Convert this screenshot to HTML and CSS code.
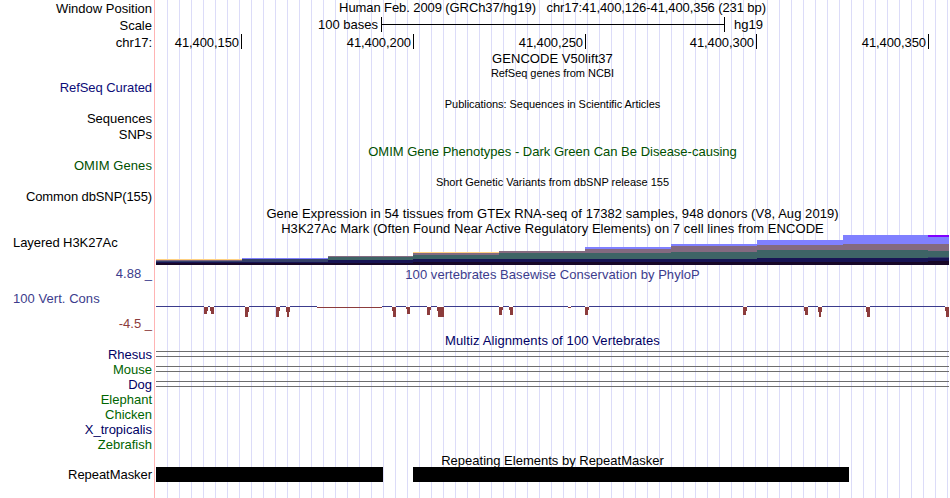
FILE: index.html
```html
<!DOCTYPE html>
<html lang="en">
<head>
    <meta charset="UTF-8">
    <title>chr17:41,400,126-41,400,356</title>
    <link rel="stylesheet" href="styles.css">
</head>
<body>
    <div class="browser">
        <div class="labels">
            <div class="label position">Window Position</div>
            <div class="label scale-label">Scale</div>
            <div class="label chrom">chr17:</div>
            <div class="label refseq navy">RefSeq Curated</div>
            <div class="label sequences">Sequences</div>
            <div class="label snps">SNPs</div>
            <div class="label omim green">OMIM Genes</div>
            <div class="label dbsnp">Common dbSNP(155)</div>
            <div class="label layered left">Layered H3K27Ac</div>
            <div class="label max blue">4.88 _</div>
            <div class="label cons left blue">100 Vert. Cons</div>
            <div class="label min red">-4.5 _</div>
            <div class="species">
                <div class="label dark">Rhesus</div>
                <div class="label forest">Mouse</div>
                <div class="label dark">Dog</div>
                <div class="label forest">Elephant</div>
                <div class="label forest">Chicken</div>
                <div class="label dark">X_tropicalis</div>
                <div class="label forest">Zebrafish</div>
            </div>
            <div class="label rmsk">RepeatMasker</div>
        </div>

        <div class="tracks">
            <div class="title window">Human Feb. 2009 (GRCh37/hg19) &nbsp; chr17:41,400,126-41,400,356 (231 bp)</div>
            <div class="scale">
                <span class="bases">100 bases</span>
                <div class="scale-bar"><div class="scale-line"></div></div>
                <span>hg19</span>
            </div>
            <div class="ruler">
                <div class="tick">41,400,150</div>
                <div class="tick">41,400,200</div>
                <div class="tick">41,400,250</div>
                <div class="tick">41,400,300</div>
                <div class="tick">41,400,350</div>
            </div>
            <div class="title gencode">GENCODE V50lift37</div>
            <div class="title small ncbi">RefSeq genes from NCBI</div>
            <div class="title small pubs">Publications: Sequences in Scientific Articles</div>
            <div class="title omim-title green">OMIM Gene Phenotypes - Dark Green Can Be Disease-causing</div>
            <div class="title small variants">Short Genetic Variants from dbSNP release 155</div>
            <div class="title gtex">Gene Expression in 54 tissues from GTEx RNA-seq of 17382 samples, 948 donors (V8, Aug 2019)</div>
            <div class="title h3k">H3K27Ac Mark (Often Found Near Active Regulatory Elements) on 7 cell lines from ENCODE</div>

            <svg class="signal" width="793" height="30" viewBox="156 235 793 30" shape-rendering="crispEdges">
                <!-- light blue -->
                <path fill="#8080ff" d="M242 258h86v2h-86zM585 247h86v3h-86zM671 244h86v3h-86zM757 240h86v6h-86zM843 235h106v10h-106z"/>
                <path fill="#8000ff" d="M928 235h21v2h-21z"/>
                <!-- yellow -->
                <path fill="#ffd080" d="M156 259h86v1h-86zM413 252h86v1h-86z"/>
                <!-- mauve -->
                <path fill="#846a80" d="M156 260h86v1h-86zM328 256h85v2h-85zM413 253h86v3h-86zM499 251h86v3h-86zM585 249h86v5h-86zM671 246h86v7h-86zM757 245h86v6h-86zM843 244h106v8h-106z"/>
                <!-- teal -->
                <path fill="#3e6466" d="M328 257h85v8h-85zM413 255h86v10h-86zM499 253h86v12h-86zM585 253h86v12h-86zM671 252h86v13h-86zM757 250h171v15h-171zM928 251h21v14h-21z"/>
                <path fill="#34406a" d="M156 261h86v1h-86zM242 259h86v3h-86zM928 257h21v1h-21z"/>
                <!-- navy -->
                <path fill="#181454" d="M156 262h172v3h-172zM328 260h85v5h-85zM413 259h344v6h-344zM757 258h192v7h-192z"/>
                <!-- near black -->
                <path fill="#180828" d="M156 263h257v2h-257zM413 262h515v3h-515zM928 261h21v4h-21z"/>
            </svg>

            <div class="title phylop blue">100 vertebrates Basewise Conservation by PhyloP</div>
            <svg class="wiggle" width="793" height="11" viewBox="156 306 793 11" shape-rendering="crispEdges">
                <path fill="#3c3c8c" d="M156 306h48v1h-48zM208 306h2v1h-2zM214 306h31v1h-31zM249 306h27v1h-27zM280 306h6v1h-6zM290 306h27v1h-27zM382 306h10v1h-10zM396 306h10v1h-10zM410 306h17v1h-17zM431 306h6v1h-6zM444 306h55v1h-55zM503 306h6v1h-6zM513 306h55v1h-55zM571 306h14v1h-14zM589 306h154v1h-154zM747 306h57v1h-57zM808 306h10v1h-10zM822 306h44v1h-44zM870 306h75v1h-75z"/>
                <path fill="#8c3c3c" d="M317 307h65v1h-65zM568 307h3v1h-3z
                    M204 307h4v4h-1v3h-3zM210 307h4v7h-3v-3h-1z
                    M245 307h4v5h-1v5h-3zM276 307h4v4h-1v6h-3z
                    M286 307h4v5h-1v5h-2v-5h-1zM392 307h4v10h-3v-6h-1z
                    M406 307h4v7h-3v-5h-1zM427 307h4v3h-1v5h-3z
                    M437 307h7v10h-6v-6h-1zM499 307h4v3h-1v5h-3z
                    M509 307h4v8h-3v-5h-1zM585 307h4v3h-1v5h-3z
                    M743 307h4v4h-1v4h-3zM804 307h4v8h-3v-4h-1z
                    M818 307h4v5h-1v5h-2v-5h-1zM866 307h4v10h-3v-5h-1z
                    M945 307h4v10h-3v-6h-1z"/>
            </svg>

            <div class="title multiz dark">Multiz Alignments of 100 Vertebrates</div>
            <div class="chains">
                <div class="chain"></div>
                <div class="chain"></div>
                <div class="chain"></div>
            </div>

            <div class="title repeats">Repeating Elements by RepeatMasker</div>
            <div class="blocks">
                <div class="block first"></div>
                <div class="block second"></div>
            </div>
        </div>
    </div>
</body>
</html>
```
FILE: styles.css
```css
body {
    margin: 0;
    background-color: #fff;
    color: #000;
    font-family: "Liberation Sans", Arial, sans-serif;
    font-size: 13px;
    line-height: 15px;
}
.browser {
    display: flex;
    width: 949px;
    height: 498px;
    overflow: hidden;
}

/* left column */
.labels {
    width: 154px;
    flex-shrink: 0;
    box-sizing: border-box;
    padding: 1px 2px 0 13px;
}
.label {
    height: 15px;
    text-align: right;
    white-space: nowrap;
}
.left { text-align: left; }
.scale-label, .chrom { margin-top: 2px; }
.refseq {
    margin-top: 30px;
    letter-spacing: -0.07px;
}
.sequences { margin-top: 16px; }
.snps { margin-top: 1px; }
.omim {
    margin-top: 16px;
    letter-spacing: 0.08px;
}
.dbsnp {
    margin-top: 16px;
    letter-spacing: -0.11px;
}
.layered {
    margin-top: 31px;
    letter-spacing: -0.06px;
}
.max { margin-top: 16px; }
.cons, .min { margin-top: 10px; }
.cons { letter-spacing: 0.05px; }
.species { margin-top: 16px; }
.rmsk {
    margin-top: 15px;
    letter-spacing: -0.05px;
}

/* colors */
.navy { color: #0c0c78; }
.green { color: #005000; }
.forest { color: #006400; }
.dark { color: #000064; }
.blue { color: #3c3c8c; }
.red { color: #8c3c3c; }

/* track image with vertical guide lines */
.tracks {
    width: 793px;
    flex-shrink: 0;
    display: flow-root;
    border-left: 1px solid #ffb4b4;
    padding-left: 1px;
    background: repeating-linear-gradient(to right, transparent 0, transparent 11px, #dcdcf8 11px, #dcdcf8 12px) content-box;
}
.title {
    height: 15px;
    text-align: center;
    white-space: nowrap;
}
.small {
    height: 13px;
    font-size: 11px;
    line-height: 13px;
}
.window { letter-spacing: -0.09px; }
.scale {
    display: flex;
    margin-top: 2px;
    height: 15px;
}
.bases {
    width: 222px;
    text-align: right;
}
.scale-bar {
    box-sizing: border-box;
    width: 344px;
    margin: 0 9px 0 3px;
    padding-top: 7px;
    border-left: 1px solid #000;
    border-right: 1px solid #000;
}
.scale-line {
    height: 1px;
    background-color: #000;
}
.ruler {
    display: flex;
    margin-top: 2px;
}
.tick {
    box-sizing: border-box;
    width: 172px;
    height: 15px;
    padding: 1px 2px 0 0;
    border-right: 1px solid #000;
    text-align: right;
    letter-spacing: -0.08px;
}
.tick:first-child { width: 86px; }
.tick:nth-child(4) { width: 171px; }
.gencode {
    margin-top: 2px;
    letter-spacing: 0.05px;
}
.ncbi {
    margin-top: 1px;
    letter-spacing: -0.04px;
}
.pubs {
    margin-top: 18px;
    letter-spacing: -0.05px;
}
.omim-title { margin-top: 33px; }
.variants { margin-top: 17px; }
.gtex {
    margin-top: 17px;
    letter-spacing: 0.055px;
}
.h3k { letter-spacing: 0.06px; }
.signal {
    display: block;
    margin-top: -1px;
}
.phylop {
    margin-top: 2px;
    letter-spacing: 0.05px;
}
.wiggle {
    display: block;
    margin-top: 24px;
}
.multiz {
    margin-top: 16px;
    letter-spacing: 0.11px;
}
.chains { padding-top: 3px; }
.chain {
    box-sizing: border-box;
    height: 6px;
    margin-bottom: 9px;
    border-top: 1px solid #6e6e6e;
    border-bottom: 1px solid #6e6e6e;
}
.repeats { margin-top: 66px; }
.blocks {
    display: flex;
    gap: 30px;
    margin-top: -1px;
}
.block {
    position: relative;
    height: 15px;
    background-color: #000;
}
.first { width: 227px; }
.second { width: 436px; }
```
